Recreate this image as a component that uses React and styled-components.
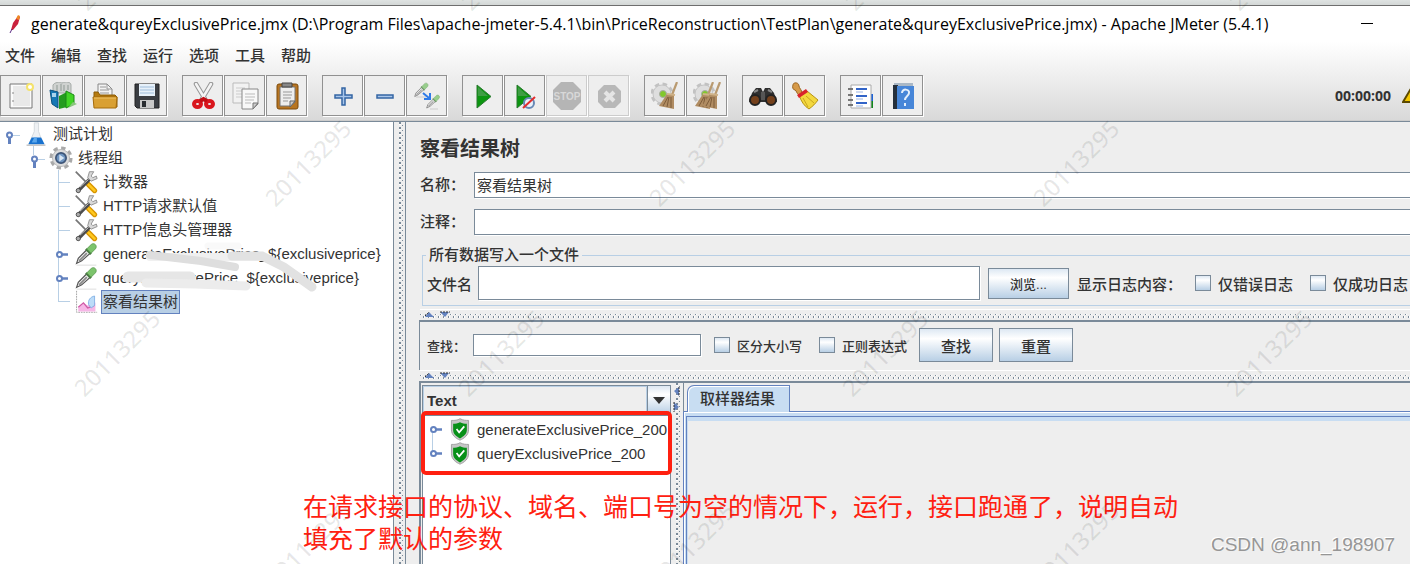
import styled, { createGlobalStyle } from "styled-components";

const GlobalStyle = createGlobalStyle`
  * {
    box-sizing: border-box;
  }

  body {
    margin: 0;
    overflow: hidden;
    background: #eeeeee;
    color: #333333;
    font-family: "Liberation Sans", "Noto Sans CJK SC", sans-serif;
    font-size: 15px;
  }
`;

const Window = styled.div`
  position: relative;
  display: flex;
  flex-direction: column;
  height: 100vh;
  overflow: hidden;
`;

const TopStrip = styled.div`
  flex: none;
  height: 6px;
  background: linear-gradient(#dfe3e2, #d3d7d6);
  border-bottom: 1px solid #6e6e6e;
`;

const TitleBar = styled.header`
  display: flex;
  flex: none;
  align-items: center;
  gap: 8px;
  height: 36px;
  padding: 0 37px 0 7px;
  background: #ffffff;
`;

const Title = styled.h1`
  flex: 1;
  margin: 0;
  color: #000000;
  font-family: "Open Sans", "Noto Sans CJK SC", sans-serif;
  font-size: 16px;
  font-weight: 400;
  white-space: nowrap;
`;

const MinimizeButton = styled.button`
  width: 12px;
  height: 12px;
  padding: 0;
  border: 0;
  border-bottom: 1px solid #000000;
  background: none;
  align-self: flex-start;
  margin-top: 6px;
`;

const Bars = styled.div`
  flex: none;
  background: linear-gradient(#ffffff, #d9d9d9);
  border-bottom: 1px solid #cccccc;
`;

const MenuBar = styled.nav`
  display: flex;
  gap: 16px;
  height: 33px;
  padding: 3px 5px;
`;

const MenuItem = styled.button`
  padding: 0;
  border: 0;
  background: none;
  color: #333333;
  font-family: inherit;
  font-size: 15px;
  font-weight: 500;
  line-height: 22px;
  align-self: flex-start;
`;

const ToolBar = styled.div`
  display: flex;
  align-items: center;
  gap: 15px;
  height: 45px;
  padding-bottom: 4px;
`;

const ToolGroup = styled.div`
  display: flex;
  gap: 1px;
`;

const ToolButton = styled.button`
  display: flex;
  align-items: center;
  justify-content: center;
  width: 41px;
  height: 41px;
  padding: 0;
  border: 1px solid ${({ disabled }) => (disabled ? "#cccccc" : "#919191")};
  background: #eeeeee;
  box-shadow: 1px 1px 0 #ffffff;
`;

const Clock = styled.span`
  margin-left: auto;
  font-family: "Open Sans", sans-serif;
  font-size: 14px;
  font-weight: 700;
`;

const Warning = styled.span`
  width: 8px;
  margin-left: -4px;
  overflow: hidden;
`;

const Body = styled.main`
  display: flex;
  flex: 1;
  min-height: 0;
  border-top: 1px solid #7a8a99;
`;

const TreePane = styled.aside`
  width: 28%;
  min-width: 394px;
  max-width: 394px;
  border-right: 1px solid #7a8a99;
  background: #ffffff;
`;

const Tree = styled.ul`
  position: relative;
  margin: 0;
  padding: 0;
  list-style: none;
`;

const TreeRow = styled.li`
  display: flex;
  align-items: center;
  height: 24px;
  padding-left: ${({ $depth }) => $depth * 25}px;
  white-space: nowrap;
`;

const TreeLabel = styled.span`
  margin-left: 3px;
  padding: 0 1px;
  line-height: 22px;
  border: 1px solid ${({ $selected }) => ($selected ? "#6382bf" : "transparent")};
  background: ${({ $selected }) => ($selected ? "#b8cfe5" : "transparent")};
`;

const Scribble = styled.svg`
  position: absolute;
  left: 116px;
  top: 120px;
`;

const VerticalDivider = styled.div`
  flex: none;
  width: 11px;
  background-color: #eeeeee;
  background-image: linear-gradient(#7a8a99 2px, #ffffff 2px, #ffffff 3px, transparent 3px),
    linear-gradient(#7a8a99 1px, transparent 1px);
  background-size: 2px 5px, 1px 5px;
  background-repeat: repeat-y;
  background-position: 5px 0, 8px 3px;
`;

const HorizontalDivider = styled.div`
  display: flex;
  flex: none;
  align-items: center;
  height: 11px;
  padding: 0 4px;
  border-top: 1px solid #ffffff;
  background-color: #eeeeee;
  background-image: linear-gradient(90deg, #7a8a99 1px, #ffffff 1px, #ffffff 2px, transparent 2px),
    linear-gradient(90deg, #7a8a99 1px, #ffffff 1px, #ffffff 2px, transparent 2px);
  background-size: 5px 1px, 5px 2px;
  background-repeat: repeat-x;
  background-position: 0 4px, 3px 6px;
`;

const Editor = styled.section`
  display: flex;
  flex: 1;
  flex-direction: column;
  min-width: 0;
  padding-left: 14px;
  border-left: 1px solid #7a8a99;
`;

const EditorTitle = styled.h2`
  margin: 0;
  padding: 12px 0 8px;
  font-size: 20px;
  font-weight: 700;
  line-height: 30px;
`;

const Field = styled.div`
  display: flex;
  align-items: center;
  margin-bottom: 11px;
`;

const FieldLabel = styled.label`
  width: 54px;
  font-weight: 500;
  line-height: 22px;
`;

const TextInput = styled.input`
  flex: ${({ $width }) => ($width ? "none" : 1)};
  width: ${({ $width }) => $width || "auto"};
  min-width: 0;
  height: ${({ $height }) => $height}px;
  padding: 0 2px 2px;
  border: 1px solid #7a8a99;
  border-right-width: ${({ $open }) => ($open ? 0 : 1)}px;
  background: #ffffff;
  box-shadow: 1px 1px 0 #ffffff;
  color: #333333;
  font-family: inherit;
  font-size: 15px;
`;

const FileGroup = styled.fieldset`
  min-width: 0;
  margin: -2px 0 3px 2px;
  padding: 0 0 5px 4px;
  border: 1px solid #b8cfe5;
  border-right: 0;
`;

const Legend = styled.legend`
  margin-left: -1px;
  padding: 0 3px;
  font-weight: 500;
  line-height: 22px;
`;

const FileRow = styled.div`
  display: flex;
  align-items: center;
  padding-right: 2px;
  font-weight: 500;
  white-space: nowrap;
`;

const FileLabel = styled.label`
  width: 51px;
`;

const Button = styled.button`
  width: ${({ $width }) => $width}px;
  height: ${({ $height }) => $height}px;
  padding: 0;
  border: 1px solid #7a8a99;
  background: linear-gradient(#dde8f3, #ffffff 30%, #b8cfe5);
  color: #333333;
  font-family: inherit;
  font-size: ${({ $size }) => $size}px;
  font-weight: 500;
`;

const BrowseButton = styled(Button)`
  margin: 0 8px;
`;

const CheckLabel = styled.label`
  display: flex;
  align-items: center;
  gap: 7px;
  margin-right: ${({ $gap }) => $gap}px;
  font-size: ${({ $size }) => $size}px;
  white-space: nowrap;
`;

const Check = styled.input`
  appearance: none;
  width: 16px;
  height: 16px;
  margin: 0;
  border: 1px solid #7a8a99;
  background: linear-gradient(#dde8f3, #ffffff 30%, #b8cfe5);
`;

const LogHint = styled.span`
  width: 118px;
`;

const SearchBar = styled.div`
  display: flex;
  flex: none;
  align-items: center;
  height: 50px;
  margin-left: -1px;
  padding: 0 0 2px 7px;
  border-top: 2px solid #7a8a99;
  border-left: 1px solid #7a8a99;
  font-size: 13px;
  font-weight: 500;
`;

const SearchLabel = styled.label`
  width: 46px;
`;

const SearchOptions = styled.div`
  display: flex;
  margin-left: 13px;
`;

const SearchButtons = styled.div`
  display: flex;
  gap: 6px;
`;

const Results = styled.div`
  display: flex;
  flex: 1;
  min-height: 0;
  margin-left: -1px;
  border-top: 2px solid #7a8a99;
  border-left: 2px solid #7a8a99;
`;

const SamplePane = styled.div`
  display: flex;
  flex-direction: column;
  width: 250px;
  padding: 2px 0 0 1px;
`;

const Combo = styled.div`
  display: flex;
  height: 30px;
  border: 1px solid #7a8a99;
`;

const ComboSelect = styled.select`
  appearance: none;
  flex: 1;
  padding: 0 3px;
  border: 1px solid #b8cfe5;
  border-radius: 0;
  background: #eeeeee;
  color: #333333;
  font-family: inherit;
  font-size: 15px;
  font-weight: 700;
`;

const ComboArrow = styled.span`
  display: flex;
  align-items: center;
  justify-content: center;
  width: 23px;
  border-left: 1px solid #7a8a99;
  background: linear-gradient(#dde8f3, #ffffff 30%, #b8cfe5);
`;

const SampleList = styled.ul`
  position: relative;
  flex: 1;
  margin: 0;
  padding: 1px 0 0;
  list-style: none;
  border: 1px solid #7a8a99;
  border-bottom: 0;
  background: #ffffff;
`;

const SampleRow = styled.li`
  display: flex;
  align-items: center;
  height: 24px;
  padding-left: 1px;
`;

const SampleLabel = styled.span`
  margin-left: 5px;
`;

const Highlight = styled.div`
  position: absolute;
  left: -2px;
  right: -2px;
  top: -5px;
  height: 64px;
  border: 4px solid #ff2010;
  border-radius: 5px;
`;

const SampleDivider = styled(VerticalDivider)`
  width: 12px;
  padding: 3px 2px;
`;

const TabPane = styled.div`
  display: flex;
  flex: 1;
  flex-direction: column;
`;

const TabStrip = styled.div`
  display: flex;
  height: 29px;
  padding: 2px 0 0 3px;
  border-left: 1px solid #7a8a99;
  border-bottom: 1px solid #6382bf;
`;

const Tab = styled.button`
  width: 103px;
  height: 28px;
  padding: 0 2px 4px 0;
  border: 1px solid #6382bf;
  border-bottom: 0;
  border-top-left-radius: 7px;
  background: #c8ddf2;
  box-shadow: inset 1px 1px 0 #ffffff;
  color: #333333;
  font-family: inherit;
  font-size: 15px;
  font-weight: 500;
`;

const TabContent = styled.div`
  flex: 1;
  padding: 4px 0 0 2px;
  border-left: 1px solid #6382bf;
  background: #c8ddf2;
  box-shadow: inset 1px 1px 0 #ffffff;
`;

const TabInner = styled.div`
  height: 100%;
  border-top: 1px solid #6382bf;
  border-left: 1px solid #6382bf;
  background: #eeeeee;
  box-shadow: inset 1px 4px 0 #c8ddf2;
`;

const Note = styled.p`
  position: absolute;
  left: 303px;
  top: 489px;
  width: 880px;
  margin: 0;
  color: #ff2010;
  font-family: "Noto Sans CJK SC", sans-serif;
  font-size: 25px;
  line-height: 32px;
`;

const Watermark = styled.span`
  position: absolute;
  left: ${({ $x }) => $x}px;
  top: ${({ $y }) => $y}px;
  transform: translate(-50%, -50%) rotate(-45deg);
  color: rgba(0, 0, 0, 0.09);
  font-family: "Noto Sans", sans-serif;
  font-size: 24px;
  font-weight: 500;
  line-height: 24px;
  pointer-events: none;
`;

const Credit = styled.span`
  position: absolute;
  right: 15px;
  bottom: 6px;
  color: #969696;
  font-size: 19px;
  line-height: 26px;
  text-shadow: -1px -1px 0 #ffffff;
`;

const Icon = ({ size = 28, children }) => (
  <svg width={size} height={size} viewBox="0 0 28 28" fill="none" aria-hidden="true">
    {children}
  </svg>
);

const Pipette = () => (
  <>
    <path d="M3 25 5 19 15 9l4 4L9 22z" fill="#f4f4f4" stroke="#555" strokeWidth="1.4" />
    <path d="m6 22 9-9" stroke="#888" strokeWidth="2" />
    <path d="m14 8 6 6" stroke="#4a7a43" strokeWidth="3" />
    <path d="m15 8 5-5c3-3 8 1 5 5l-5 5z" fill="#7cc46c" stroke="#5c9c52" />
  </>
);

const Gear = () => (
  <>
    <circle cx="11" cy="12" r="10" stroke="#c2c2c2" strokeWidth="3" strokeDasharray="4.5 3.4" />
    <circle cx="11" cy="12" r="9" fill="#dedede" stroke="#c4c4c4" />
    <circle cx="12" cy="12" r="3.5" fill="#82c82c" stroke="#aaa" />
  </>
);

const Broom = ({ x = 0 }) => (
  <g transform={`translate(${x} 0)`}>
    <path d="m26 0-5 13" stroke="#b99a70" strokeWidth="2.2" />
    <path d="m16 12 7 1v14L8 24z" fill="#b08c62" />
    <path d="m17 15-5 9m6-9-2 10m4-10v11" stroke="#7d5c3a" />
    <path d="m16 12 8 1" stroke="#cfb288" strokeWidth="2" />
  </g>
);

const icons = {
  new: (
    <>
      <path d="M3 2h22v24H3z" fill="#fbfbfb" stroke="#777" />
      <path d="M6 4h17v20H6z" fill="#e9e9e9" />
      <path d="M6 10v2m0 6v2" stroke="#888" />
      <circle cx="23" cy="5" r="3" fill="#fff" stroke="#f5e36c" strokeWidth="2" />
    </>
  ),
  templates: (
    <>
      <path d="M4 8V3c2-3 6-3 9-2 4-2 9-1 9 2v8H4z" fill="#cfd2d0" stroke="#a5aba8" />
      <path d="M8 9V3m4 6V2m3 7V3m4 5V3" stroke="#8f9a94" />
      <path d="m1 8 8 2v16l-6-4z" fill="#1678b5" stroke="#0c527f" />
      <path d="M3 11h4v4H3z" fill="#a9d4ee" />
      <path d="m10 14 8-4v15l-8 2z" fill="#249b1f" />
      <path d="m17 9 8 4v9l-8 4z" fill="#42d426" stroke="#198915" />
      <path d="m24 20 4 2-9 4z" fill="#89c77c" />
    </>
  ),
  open: (
    <>
      <path d="M7 13V2h9l5 5v7H7z" fill="#f3f3f3" stroke="#888" />
      <path d="M9 5h6M9 8h9m-9 3h9M16 2v5h5" stroke="#999" />
      <path d="M3 14v-4h4l2 3h15l2 2v10H4z" fill="#b57a0e" stroke="#8b5a05" />
      <path d="M2 15h24l-1 11H3z" fill="#d9a033" stroke="#a56c0c" />
      <path d="M3 16h22" stroke="#f0c468" />
    </>
  ),
  save: (
    <>
      <path d="M2 2h24v24H4l-2-2z" fill="#3a3d42" stroke="#222" />
      <path d="M6 2h16v12H6z" fill="#e7f1fa" />
      <path d="M7 5h14M7 8h14M7 11h14" stroke="#9fbddb" />
      <path d="M7 18h14v8H7z" fill="#c8c8c8" />
      <path d="M9 19h4v6H9z" fill="#292c30" />
    </>
  ),
  cut: (
    <>
      <path d="m7 2 9 15M22 2l-9 15" stroke="#969696" strokeWidth="4.500" strokeLinecap="round" />
      <path d="m7 2 9 15M22 2l-9 15" stroke="#f4f4f4" strokeWidth="2.500" strokeLinecap="round" />
      <ellipse cx="8.500" cy="22" rx="3.500" ry="3" stroke="#d9161d" strokeWidth="4" />
      <ellipse cx="20.500" cy="22" rx="3.500" ry="3" stroke="#d9161d" strokeWidth="4" />
      <path d="m11 19 3.500-2 3.500 2" stroke="#c30d14" strokeWidth="4" />
    </>
  ),
  copy: (
    <>
      <path d="M2 1h16v20H2z" fill="#f2f2f2" stroke="#bbb" />
      <path d="M5 6h9M5 9h6m-6 3h6m-6 3h6" stroke="#ccc" />
      <path d="M11 7h16v15l-5 5H11z" fill="#f8f8f8" stroke="#888" />
      <path d="M14 12h10m-10 3h10m-10 3h9m-9 3h6" stroke="#bbb" />
      <path d="M27 21h-5v6z" fill="#ccc" stroke="#777" />
    </>
  ),
  paste: (
    <>
      <rect x="4" y="2" width="21" height="25" rx="2" fill="#b77522" stroke="#7c4a0b" />
      <path d="M7 5h15v15l-4 4H7z" fill="#eee" stroke="#777" />
      <path d="M9 4V1h10v4H9z" fill="#888" stroke="#444" />
      <path d="M10 10h9M10 13h9M10 16h8M10 19h5" stroke="#999" />
      <path d="M22 19h-5v6z" fill="#ccc" stroke="#666" />
    </>
  ),
  plus: (
    <path d="M13 6h3v7h7v3h-7v7h-3v-7H6v-3h7z" fill="#a9c6ea" stroke="#3465a4" strokeWidth="1.500" />
  ),
  minus: <path d="M6 13h16v3H6z" fill="#a9c6ea" stroke="#3465a4" strokeWidth="1.500" />,
  toggle: (
    <>
      <g opacity=".75">
        <g transform="scale(.58)"><Pipette /></g>
        <g transform="translate(12 12) scale(.56)"><Pipette /></g>
      </g>
      <path d="M3 15h10m4 12h8" stroke="#ccc" />
      <path d="m10 11 6 5m1-5v6h-6" stroke="#2f7be8" strokeWidth="2" />
    </>
  ),
  start: (
    <>
      <path d="M8 3 22 14.500 8 26z" fill="#0c9610" stroke="#2b7a30" />
      <path d="m9 5 10 9H9z" fill="#3f9d44" />
    </>
  ),
  startNoPause: (
    <>
      <path d="M6 3 20 14.500 6 26z" fill="#0c9610" stroke="#2b7a30" />
      <path d="m7 5 10 9H7z" fill="#3f9d44" />
      <circle cx="18" cy="21" r="5" fill="#e9f0fa" stroke="#6888b5" strokeWidth="2" />
      <path d="M12 26 24 15" stroke="#e32d2d" strokeWidth="2" />
    </>
  ),
  stop: (
    <>
      <path d="M8 0h12l8 8v12l-8 8H8l-8-8V8z" fill="#b5b5b5" />
      <text x="14" y="18" textAnchor="middle" fill="#d8d8d8" fontFamily="Liberation Sans" fontSize="10" fontWeight="700">STOP</text>
    </>
  ),
  shutdown: (
    <>
      <path d="M9 3h11l6 6v11l-6 6H9l-6-6V9z" fill="#b8b8b8" />
      <path d="m10 10 9 9m0-9-9 9" stroke="#e5e5e5" strokeWidth="4" />
    </>
  ),
  clear: (
    <>
      <Gear />
      <Broom />
    </>
  ),
  clearAll: (
    <>
      <Gear />
      <Broom x={-6} />
      <Broom x={1} />
    </>
  ),
  search: (
    <>
      <path d="m3 11 4-5h5l2 4 2-4h5l4 5 3 9H0z" fill="#303030" />
      <path d="m5 10 4-2m10 0 4 2" stroke="#888" strokeWidth="2" />
      <circle cx="6" cy="18" r="5" fill="#74401b" stroke="#222" strokeWidth="2" />
      <circle cx="22" cy="18" r="5" fill="#74401b" stroke="#222" strokeWidth="2" />
      <path d="M12 10h4v8h-4z" fill="#555" />
    </>
  ),
  reset: (
    <>
      <path d="M2 3c0-3 6-3 6 1 0 2 3 4 3 7l-3 2c-3-2-2-4-4-5C2 8 1 5 2 3z" fill="#d69a49" stroke="#9c6724" />
      <path d="m8 13 8-4 11 9c-3 4-5 6-9 9-5-3-8-8-10-14z" fill="#f3d83e" stroke="#b79413" />
      <path d="m12 16 5 9m-2-11 8 7" stroke="#c9a61d" />
      <path d="m6 13 9-6 2 3-9 6z" fill="#d9232b" />
    </>
  ),
  functions: (
    <>
      <path d="M22 12h4v7h-4z" fill="#1c63d8" />
      <path d="M22 19h4v7h-4z" fill="#12861b" />
      <path d="M4 3h20v23H4z" fill="#fff" stroke="#aaa" />
      <path d="M9 7h11M9 14h11M9 21h11" stroke="#3264c8" strokeWidth="2" />
      <path d="M9 10h7M9 17h7M9 24h7" stroke="#9bb5e5" />
      <path d="M1 7h5M1 13h5M1 18h5M1 23h5" stroke="#777" strokeWidth="2" />
    </>
  ),
  help: (
    <>
      <path d="M5 1h19v4H5z" fill="#aab8c6" />
      <path d="M4 3h5v24H4z" fill="#25303c" />
      <path d="M8 4h17v23H8z" fill="#4786d8" />
      <path d="M13 11c0-5 8-4 7 0 0 3-4 3-4 7m0 3v3" stroke="#e4effc" strokeWidth="2" />
    </>
  ),
  flask: (
    <>
      <path d="M12 1h5v10l5 14H6l6-14z" fill="#eef1f4" stroke="#d0d6db" />
      <path d="m9 18-4 8h19l-4-8z" fill="#1872cf" />
      <path d="m12 18-3 6h6v-6z" fill="#5ba7ec" />
      <path d="M3 27h22" stroke="#999" />
    </>
  ),
  threads: (
    <>
      <circle cx="14" cy="14" r="11.500" stroke="#a9a9a9" strokeWidth="4" strokeDasharray="5 4" />
      <circle cx="14" cy="14" r="10" fill="#dcdcdc" stroke="#b5b5b5" />
      <circle cx="14" cy="14" r="6" fill="#6f95c0" stroke="#3e5577" strokeWidth="2" />
      <path d="m12 10 6 4-6 4z" fill="#d9e7f5" />
    </>
  ),
  tools: (
    <>
      <path d="m2 2 15 15" stroke="#777" strokeWidth="2" />
      <path d="m17 17 7 7" stroke="#d89500" strokeWidth="6" strokeLinecap="round" />
      <path d="m17 17 7 7" stroke="#ffc81e" strokeWidth="3" strokeLinecap="round" />
      <path d="M4 25 19 10" stroke="#4d4d4d" strokeWidth="4" />
      <path d="m7 20 10-9" stroke="#ddd" />
      <path d="m18 2-2 7 4 4 7-3-1-3-4 2-2-2 3-5z" fill="#d8d8d8" stroke="#888" />
      <circle cx="5" cy="24" r="2.500" fill="#aaa" stroke="#444" />
    </>
  ),
  sampler: (
    <>
      <Pipette />
      <path d="M3 27h23" stroke="#d8d8d8" />
    </>
  ),
  chart: (
    <>
      <path d="M3 1v25h24" stroke="#999" strokeDasharray="2 1" />
      <path d="M5 25v-5l6-5 5 3 5-5 4 2v10z" fill="#f6b6e6" />
      <path d="m5 20 6-5 5 6 8-3" stroke="#cf5aa7" strokeWidth="1.500" />
      <path d="M17 17c-1-5 2-9 7-10v11l-4 3z" fill="#bcdcf8" stroke="#7eaee4" />
    </>
  ),
  shield: (
    <>
      <path d="M14 2c4 2 7 2 10 2v11c0 6-5 10-10 12C9 25 4 21 4 15V4c4 0 7 0 10-2z" fill="#c6c6c6" stroke="#999" />
      <path d="M14 6c3 1 5 2 8 2v7c0 5-4 8-8 10-4-2-8-5-8-10V8c3 0 5-1 8-2z" fill="#079018" />
      <path d="m10 14 3 4 6-7" stroke="#fff" strokeWidth="2" />
    </>
  ),
};

const toolGroups = [
  ["new", "templates", "open", "save"],
  ["cut", "copy", "paste"],
  ["plus", "minus", "toggle"],
  ["start", "startNoPause", "stop", "shutdown"],
  ["clear", "clearAll"],
  ["search", "reset"],
  ["functions", "help"],
];

const menus = ["文件", "编辑", "查找", "运行", "选项", "工具", "帮助"];

const treeRows = [
  { depth: 0, handle: "open", icon: "flask", label: "测试计划" },
  { depth: 1, handle: "open", line: "M8.500 0v9", icon: "threads", label: "线程组" },
  { depth: 2, line: "M8.500 0v24M8 12.500h12", icon: "tools", label: "计数器" },
  { depth: 2, line: "M8.500 0v24M8 12.500h12", icon: "tools", label: "HTTP请求默认值" },
  { depth: 2, line: "M8.500 0v24M8 12.500h12", icon: "tools", label: "HTTP信息头管理器" },
  { depth: 2, handle: "closed", line: "M8.500 0v24", icon: "sampler", label: "generateExclusivePrice_${exclusiveprice}" },
  { depth: 2, handle: "closed", line: "M8.500 0v24", icon: "sampler", label: "queryExclusivePrice_${exclusiveprice}" },
  { depth: 2, line: "M8.500 0v12M8 11.500h12", icon: "chart", label: "察看结果树", selected: true },
];

const samples = [
  { label: "generateExclusivePrice_200", line: "M8.500 12v12" },
  { label: "queryExclusivePrice_200", line: "M8.500 0v12" },
];

const watermarks = [
  [120, -33], [504, -33], [888, -33], [1272, -33],
  [308, 163], [692, 163], [1076, 163],
  [117, 353], [501, 353], [885, 353], [1269, 353],
  [308, 545], [692, 545], [1076, 545],
];

const Handle = ({ type, line }) => (
  <svg width="24" height="24" fill="none" aria-hidden="true">
    {line && <path d={line} stroke="#b8cfe5" />}
    {type === "open" && (
      <>
        <path d="M12 13.500h8" stroke="#b8cfe5" />
        <path d="M9.500 15v7" stroke="#6382bf" strokeWidth="3" />
      </>
    )}
    {type === "closed" && <path d="M11 12.500h7" stroke="#6382bf" strokeWidth="2.500" />}
    {type && (
      <circle cx="9.500" cy={type === "open" ? 13 : 12.5} r="2.500" fill="#fff" stroke="#6382bf" strokeWidth="2" />
    )}
  </svg>
);

const CollapseArrows = () => (
  <svg width="28" height="8" aria-hidden="true">
    <path d="M1 6 5 1l5 5zM16 1h9l-4 5z" fill="#6382bf" />
    <path d="m1 5 4-4M16 1h10" stroke="#333" strokeDasharray="2 1" />
  </svg>
);

const SideArrows = () => (
  <svg width="8" height="28" aria-hidden="true">
    <path d="M6 1v9L1 5zM1 16v9l5-4z" fill="#6382bf" />
    <path d="M6 1v9M1 16v10" stroke="#333" strokeDasharray="2 1" />
  </svg>
);

function CheckBox({ label, size, gap = 0 }) {
  return (
    <CheckLabel $size={size} $gap={gap}>
      <Check type="checkbox" />
      {label}
    </CheckLabel>
  );
}

function TestPlanTree() {
  return (
    <TreePane>
      <Tree>
        {treeRows.map((row) => (
          <TreeRow key={row.label} $depth={row.depth}>
            <Handle type={row.handle} line={row.line} />
            <Icon size={24}>{icons[row.icon]}</Icon>
            <TreeLabel $selected={row.selected}>{row.label}</TreeLabel>
          </TreeRow>
        ))}
        <Scribble width="204" height="52" fill="none" strokeLinecap="round" aria-hidden="true">
          <path d="M92 4h30" stroke="#f6f6f6" strokeWidth="7" opacity=".7" />
          <path d="M34 15h112" stroke="#f0f0f0" strokeWidth="8" />
          <path d="M34 13 85 19l34 6" stroke="#dedede" strokeWidth="8" />
          <path d="M116 14h30l22 11 28 20" stroke="#e2e2e2" strokeWidth="9" />
          <path d="M12 35h62" stroke="#e6e6e6" strokeWidth="11" />
          <path d="M30 41 80 42l50 2" stroke="#ececec" strokeWidth="9" />
        </Scribble>
      </Tree>
    </TreePane>
  );
}

function ResultsArea() {
  return (
    <Results>
      <SamplePane>
        <Combo>
          <ComboSelect aria-label="Text">
            <option>Text</option>
          </ComboSelect>
          <ComboArrow>
            <svg width="12" height="7" aria-hidden="true">
              <path d="M0 0h12L6 7z" fill="#333" />
            </svg>
          </ComboArrow>
        </Combo>
        <SampleList>
          {samples.map((sample) => (
            <SampleRow key={sample.label}>
              <Handle type="closed" line={sample.line} />
              <Icon size={24}>{icons.shield}</Icon>
              <SampleLabel>{sample.label}</SampleLabel>
            </SampleRow>
          ))}
          <Highlight />
        </SampleList>
      </SamplePane>
      <SampleDivider>
        <SideArrows />
      </SampleDivider>
      <TabPane>
        <TabStrip>
          <Tab>取样器结果</Tab>
        </TabStrip>
        <TabContent>
          <TabInner />
        </TabContent>
      </TabPane>
    </Results>
  );
}

function App() {
  return (
    <Window>
      <GlobalStyle />
      <TopStrip />
      <TitleBar>
        <svg width="16" height="20" fill="none" aria-hidden="true">
          <path d="m4 16 2-7 5-7 2 1-2 7-5 6z" fill="#c9213d" />
          <path d="m9 5 2-4 2 1-1 4z" fill="#f08a24" />
          <path d="m3 19 2-4" stroke="#5b2a83" />
        </svg>
        <Title>
          generate&amp;qureyExclusivePrice.jmx (D:\Program Files\apache-jmeter-5.4.1\bin\PriceReconstruction\TestPlan\generate&amp;qureyExclusivePrice.jmx) - Apache JMeter (5.4.1)
        </Title>
        <MinimizeButton aria-label="Minimize" />
      </TitleBar>
      <Bars>
        <MenuBar>
          {menus.map((menu) => (
            <MenuItem key={menu}>{menu}</MenuItem>
          ))}
        </MenuBar>
        <ToolBar>
          {toolGroups.map((group) => (
            <ToolGroup key={group[0]}>
              {group.map((name) => (
                <ToolButton key={name} aria-label={name} disabled={name === "stop" || name === "shutdown"}>
                  <Icon>{icons[name]}</Icon>
                </ToolButton>
              ))}
            </ToolGroup>
          ))}
          <Clock>00:00:00</Clock>
          <Warning>
            <svg width="22" height="20" aria-hidden="true">
              <path d="M1 18 11 1l10 17z" fill="#f5c800" stroke="#5c4a00" strokeWidth="2" />
            </svg>
          </Warning>
        </ToolBar>
      </Bars>
      <Body>
        <TestPlanTree />
        <VerticalDivider />
        <Editor>
          <EditorTitle>察看结果树</EditorTitle>
          <Field>
            <FieldLabel htmlFor="name">名称：</FieldLabel>
            <TextInput id="name" defaultValue="察看结果树" $height={26} $open />
          </Field>
          <Field>
            <FieldLabel htmlFor="comment">注释：</FieldLabel>
            <TextInput id="comment" $height={26} $open />
          </Field>
          <FileGroup>
            <Legend>所有数据写入一个文件</Legend>
            <FileRow>
              <FileLabel htmlFor="file">文件名</FileLabel>
              <TextInput id="file" $height={34} />
              <BrowseButton $width={81} $height={31} $size={13}>浏览...</BrowseButton>
              <LogHint>显示日志内容：</LogHint>
              <CheckBox label="仅错误日志" size={15} gap={17} />
              <CheckBox label="仅成功日志" size={15} />
            </FileRow>
          </FileGroup>
          <HorizontalDivider>
            <CollapseArrows />
          </HorizontalDivider>
          <SearchBar>
            <SearchLabel htmlFor="search">查找：</SearchLabel>
            <TextInput id="search" $width="228px" $height={22} />
            <SearchOptions>
              <CheckBox label="区分大小写" size={13} gap={17} />
              <CheckBox label="正则表达式" size={13} gap={12} />
            </SearchOptions>
            <SearchButtons>
              <Button $width={74} $height={34} $size={15}>查找</Button>
              <Button $width={74} $height={34} $size={15}>重置</Button>
            </SearchButtons>
          </SearchBar>
          <HorizontalDivider>
            <CollapseArrows />
          </HorizontalDivider>
          <ResultsArea />
        </Editor>
      </Body>
      <Note>在请求接口的协议、域名、端口号为空的情况下，运行，接口跑通了，说明自动填充了默认的参数</Note>
      {watermarks.map(([x, y]) => (
        <Watermark key={`${x},${y}`} $x={x} $y={y}>20113295</Watermark>
      ))}
      <Credit>CSDN @ann_198907</Credit>
    </Window>
  );
}

export default App;
